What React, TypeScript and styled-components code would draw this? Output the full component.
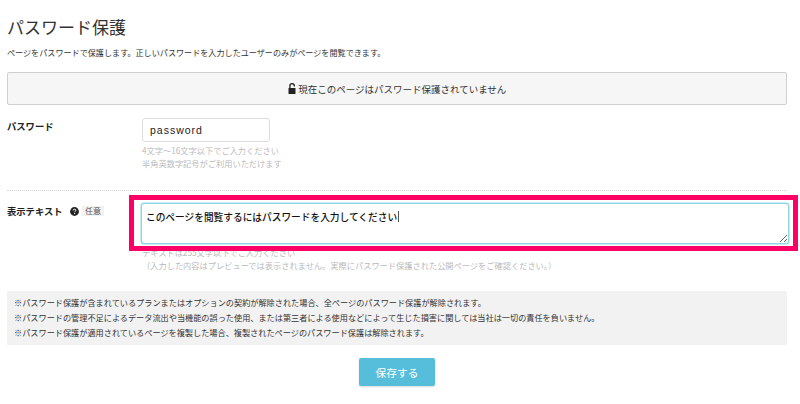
import React from "react";
import styled, { createGlobalStyle } from "styled-components";

const GlobalStyle = createGlobalStyle`
  html, body {
    margin: 0;
    padding: 0;
    background: #fff;
    font-family: "Noto Sans CJK JP", "Liberation Sans", sans-serif;
    color: #333;
  }
  * { box-sizing: border-box; }
`;

const NOTES = [
  "※パスワード保護が含まれているプランまたはオプションの契約が解除された場合、全ページのパスワード保護が解除されます。",
  "※パスワードの管理不足によるデータ流出や当機能の誤った使用、または第三者による使用などによって生じた損害に関しては当社は一切の責任を負いません。",
  "※パスワード保護が適用されているページを複製した場合、複製されたページのパスワード保護は解除されます。",
];

export default function App() {
  return (
    <Page>
      <GlobalStyle />
      <Title>パスワード保護</Title>
      <Lead>ページをパスワードで保護します。正しいパスワードを入力したユーザーのみがページを閲覧できます。</Lead>
      <StatusBanner>
        <svg width="8" height="11" viewBox="0 0 8 11" aria-hidden="true">
          <path d="M1.9 5 V2.9 a2.2 2.2 0 0 1 4.4 0 V3.6" fill="none" stroke="#222" strokeWidth="1.3" />
          <rect x="0.5" y="5" width="7" height="6" rx="0.6" fill="#222" />
        </svg>
        現在このページはパスワード保護されていません
      </StatusBanner>

      <PasswordRow>
        <FieldLabel>パスワード</FieldLabel>
        <FieldBody>
          <PasswordInput defaultValue="password" />
          <HelpText>
            4文字〜16文字以下でご入力ください
            <br />
            半角英数字記号がご利用いただけます
          </HelpText>
        </FieldBody>
      </PasswordRow>

      <DottedRule />

      <TextRow>
        <LabelGroup>
          <FieldLabel>表示テキスト</FieldLabel>
          <HelpIcon width="9" height="9" viewBox="0 0 9 9" aria-hidden="true">
            <circle cx="4.5" cy="4.5" r="4.4" fill="#222" />
            <path d="M3.1 3.5 Q3.2 2.2 4.5 2.2 Q5.9 2.2 5.9 3.3 Q5.9 4 5.1 4.4 Q4.6 4.7 4.6 5.3" fill="none" stroke="#fff" strokeWidth="1" />
            <circle cx="4.6" cy="6.6" r="0.6" fill="#fff" />
          </HelpIcon>
          <OptionalTag>任意</OptionalTag>
        </LabelGroup>
        <TextBody>
          <MessageArea defaultValue="このページを閲覧するにはパスワードを入力してください" />
          <Caret />
          <Annotation />
          <HelpText>
            テキストは255文字以下でご入力ください
            <br />
            （入力した内容はプレビューでは表示されません。実際にパスワード保護された公開ページをご確認ください。）
          </HelpText>
        </TextBody>
      </TextRow>

      <NoteBox>
        {NOTES.map((note) => (
          <Note key={note}>{note}</Note>
        ))}
      </NoteBox>

      <Actions>
        <SaveButton>保存する</SaveButton>
      </Actions>
    </Page>
  );
}

const Page = styled.div`
  width: 800px;
  height: 404px;
  overflow: hidden;
  padding: 15px 13px 0 7px;
`;

const Title = styled.h1`
  margin: 0;
  font-size: 17px;
  line-height: 24px;
  font-weight: 400;
  color: #333;
`;

const Lead = styled.p`
  margin: 8px 0 0;
  font-size: 8.1px;
  line-height: 12px;
  white-space: nowrap;
  color: #333;
`;

const StatusBanner = styled.div`
  margin-top: 13px;
  height: 33px;
  display: flex;
  align-items: center;
  justify-content: center;
  gap: 2.5px;
  background: #f6f6f6;
  border: 1.5px solid #cfcfcf;
  border-radius: 2px;
  font-size: 9.5px;
  color: #333;
`;

const PasswordRow = styled.div`
  margin-top: 13px;
  display: flex;
`;

const FieldLabel = styled.div`
  font-size: 9.3px;
  line-height: 16px;
  font-weight: 700;
  color: #222;
`;

const FieldBody = styled.div`
  margin-left: auto;
  width: 645px;
`;

const PasswordInput = styled.input`
  display: block;
  width: 128px;
  height: 24px;
  padding: 0 7px;
  background: #fff;
  border: 1px solid #ddd;
  border-radius: 3px;
  outline: none;
  font-family: "Liberation Sans", sans-serif;
  font-size: 10.5px;
  letter-spacing: 1px;
  color: #222;
`;

const HelpText = styled.p`
  margin: 2px 0 0;
  font-size: 8.22px;
  line-height: 12.5px;
  white-space: nowrap;
  color: #bbb;
`;

const DottedRule = styled.div`
  margin-top: 21px;
  border-top: 1px dotted #d8d8d8;
`;

const TextRow = styled.div`
  margin-top: 12px;
  display: flex;
`;

const LabelGroup = styled.div`
  flex: 0 0 135px;
  height: 16px;
  display: flex;
  align-items: center;
`;

const HelpIcon = styled.svg`
  margin-left: 7px;
`;

const OptionalTag = styled.span`
  margin-left: 3.5px;
  padding: 0 3px;
  background: #f2f2f2;
  font-size: 8px;
  line-height: 10px;
  color: #555;
`;

const TextBody = styled.div`
  position: relative;
  flex: 1;
  min-width: 0;
`;

const MessageArea = styled.textarea`
  display: block;
  width: 648px;
  height: 41px;
  margin-left: -1px;
  padding: 5px 4px;
  background: #fff;
  border: 1px solid #8fd6e8;
  box-shadow: 0 0 0 0.5px #8fd6e8;
  border-radius: 3px;
  outline: none;
  font-family: "Noto Sans CJK JP", sans-serif;
  font-size: 9.7px;
  line-height: 16px;
  font-weight: 500;
  color: #111;
`;

const Caret = styled.span`
  position: absolute;
  left: 256px;
  top: 8px;
  width: 1px;
  height: 11px;
  background: #555;
`;

const Annotation = styled.div`
  position: absolute;
  left: -13px;
  top: -8px;
  width: 669px;
  height: 56px;
  border: 5px solid #ff0066;
  pointer-events: none;
`;

const NoteBox = styled.div`
  margin-top: 20px;
  height: 54px;
  padding: 4px 7px;
  background: #f2f2f2;
`;

const Note = styled.p`
  margin: 0;
  font-size: 8.16px;
  line-height: 15px;
  white-space: nowrap;
  color: #333;
`;

const Actions = styled.div`
  margin-top: 13px;
  display: flex;
  justify-content: center;
`;

const SaveButton = styled.button`
  width: 76px;
  height: 28px;
  padding: 0;
  background: #56bedb;
  border: none;
  border-radius: 2px;
  box-shadow: 0 1px 2px rgba(0, 0, 0, 0.15);
  font-family: "Noto Sans CJK JP", sans-serif;
  font-size: 10.7px;
  color: #fff;
`;
